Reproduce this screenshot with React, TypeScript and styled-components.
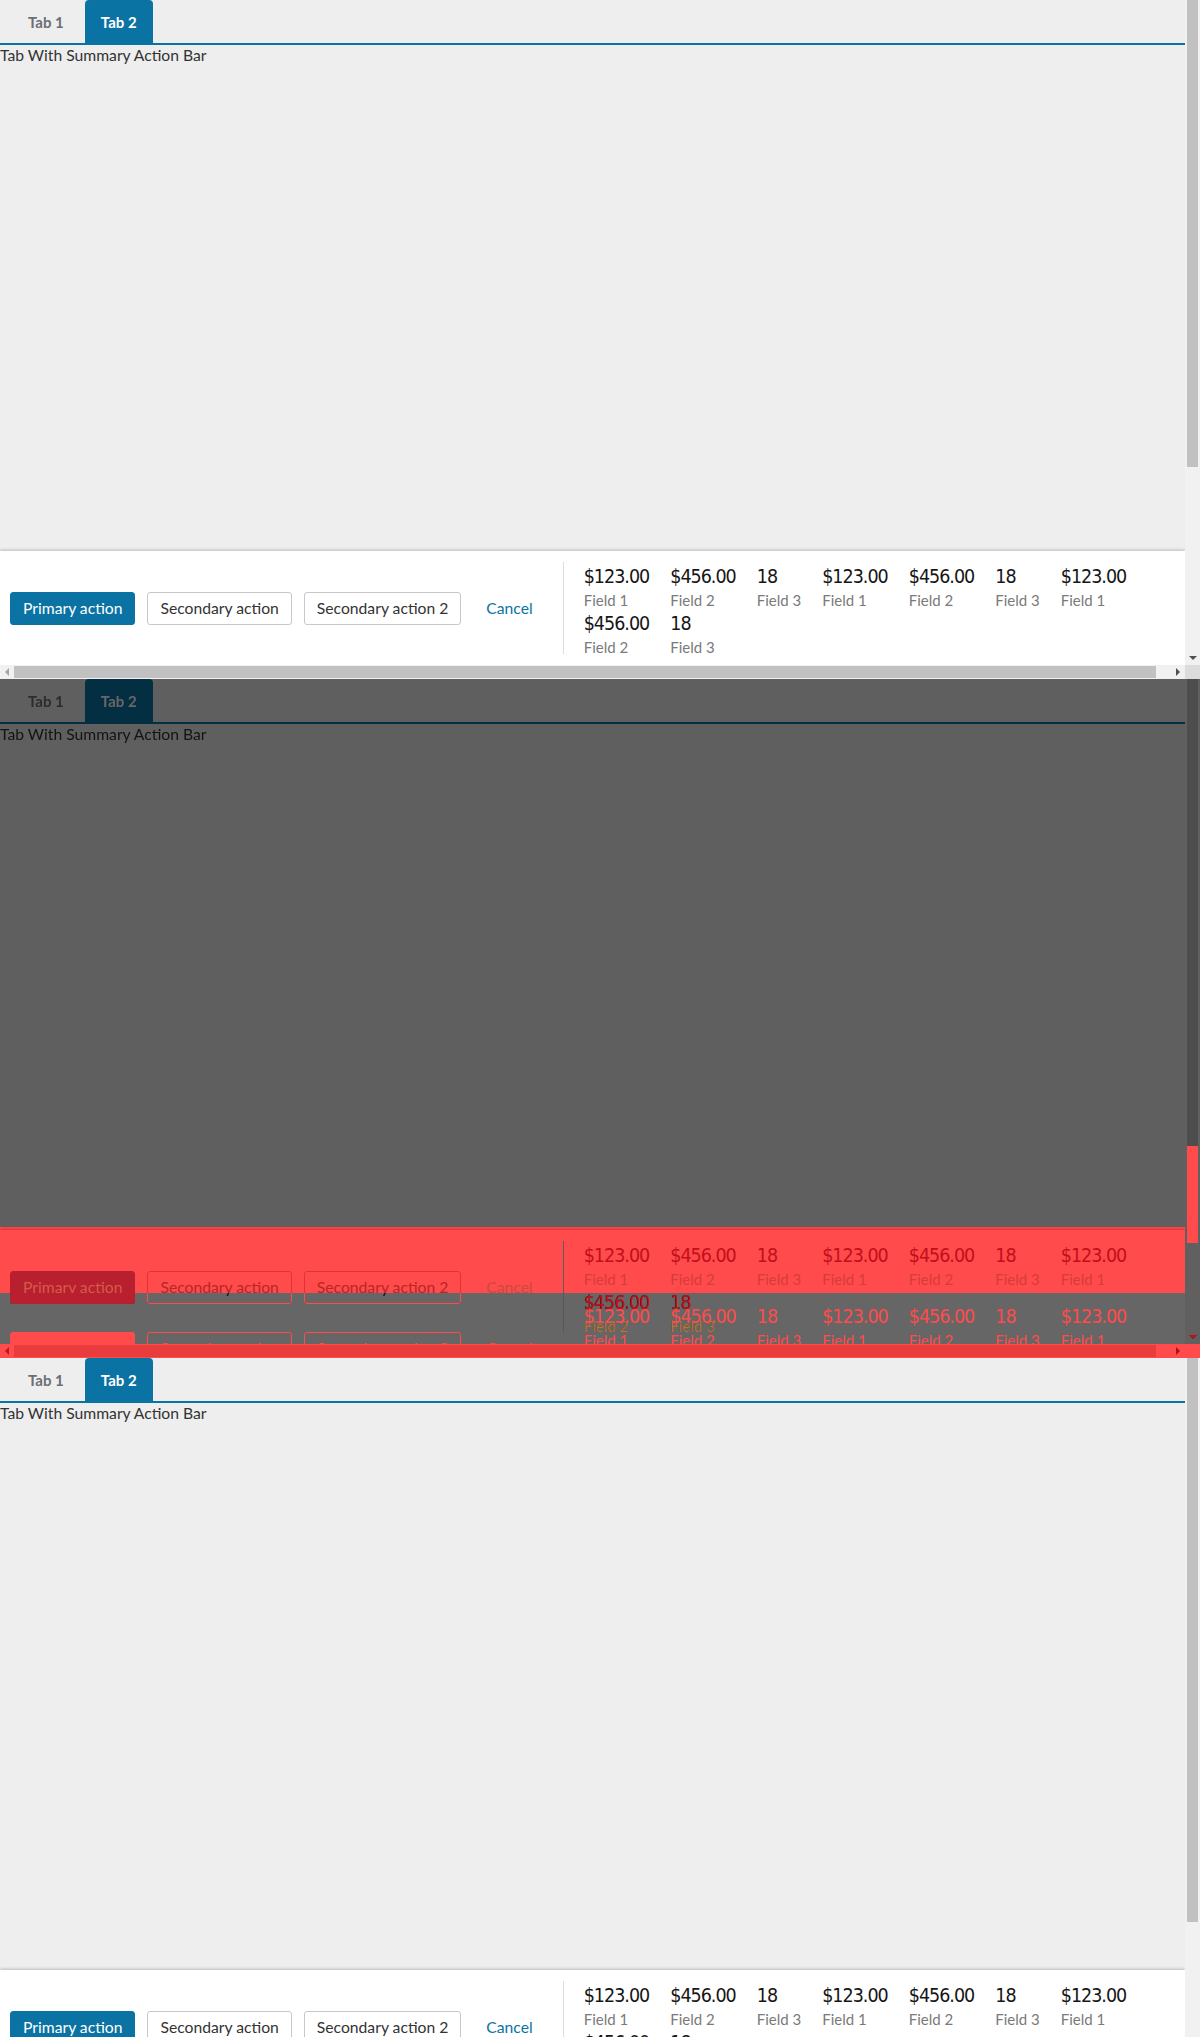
import React from 'react'
import styled, { createGlobalStyle, ThemeProvider } from 'styled-components'

type Palette = {
  pageBg: string
  text: string
  tabText: string
  tabActiveBg: string
  tabActiveText: string
  line: string
  barBg: string
  barShadow: string
  primaryBg: string
  primaryText: string
  secBg: string
  secBorder: string
  secText: string
  cancel: string
  divider: string
  value: string
  label: string
  track: string
  thumb: string
  arrow: string
  arrowOff: string
  corner: string
}

const T = 'transparent'
const RED = '#ff4b4b'

const normal: Palette = {
  pageBg: '#eeeeee',
  text: '#333333',
  tabText: '#6c6f72',
  tabActiveBg: '#0b73a3',
  tabActiveText: '#ffffff',
  line: '#0b73a3',
  barBg: '#ffffff',
  barShadow: '0 -1px 3px rgba(0, 0, 0, 0.22)',
  primaryBg: '#0b73a3',
  primaryText: '#ffffff',
  secBg: '#ffffff',
  secBorder: '#c8c8c8',
  secText: '#333333',
  cancel: '#0b73a3',
  divider: '#dddddd',
  value: '#161616',
  label: '#7a7a7a',
  track: '#f1f1f1',
  thumb: '#c1c1c1',
  arrow: '#505050',
  arrowOff: '#a3a3a3',
  corner: '#dcdcdc',
}

const hidden: Palette = {
  pageBg: T, text: T, tabText: T, tabActiveBg: T, tabActiveText: T, line: T,
  barBg: T, barShadow: 'none', primaryBg: T, primaryText: T, secBg: T, secBorder: T,
  secText: T, cancel: T, divider: T, value: T, label: T, track: T, thumb: T,
  arrow: T, arrowOff: T, corner: T,
}

// diff band: changed pixels, the old page showing darker through the red
const band: Palette = {
  ...hidden,
  pageBg: RED,
  barBg: RED,
  barShadow: '0 -1px 3px rgba(140, 0, 0, 0.35)',
  primaryBg: '#b8202f',
  primaryText: '#d65a48',
  secBorder: '#dd3535',
  secText: '#b82626',
  cancel: '#c94a40',
  divider: '#5c5c5c',
  value: '#c20f1b',
  label: '#d63c3c',
  track: RED,
  thumb: '#e93c3c',
  arrow: '#a81414',
  arrowOff: '#b81a1a',
  corner: RED,
}

const ghostOld: Palette = {
  ...hidden,
  primaryBg: '#b8202f',
  secBorder: RED,
  value: '#c20f1b',
  label: '#b8763a',
  arrow: '#c20f1b',
}

const ghostNew: Palette = {
  ...hidden,
  primaryBg: RED,
  secBorder: RED,
  secText: RED,
  cancel: RED,
  value: RED,
  label: RED,
  thumb: RED,
}

const c = (k: keyof Palette) => ({ theme }: { theme: any }) => theme[k]

const GlobalStyle = createGlobalStyle`
  html, body {
    margin: 0;
    padding: 0;
    background: #eeeeee;
  }
  body {
    width: 1200px;
    font-family: Lato, "Open Sans", sans-serif;
  }
`

const Frame = styled.section`
  position: relative;
  width: 1200px;
  height: 679px;
  overflow: hidden;
`

const Dimmed = styled.div`
  filter: brightness(0.4);
`

const Layer = styled.div<{ $clip: string }>`
  position: absolute;
  inset: 0;
  clip-path: inset(${({ $clip }) => $clip});
`

const PageGrid = styled.div`
  display: grid;
  grid-template-columns: 1fr 15px;
  grid-template-rows: auto 14px;
  width: 1200px;
  background: ${c('pageBg')};
  font-family: Lato, "Open Sans", sans-serif;
`

const Main = styled.div`
  display: flex;
  flex-direction: column;
  min-width: 0;
`

const TabList = styled.div`
  display: flex;
  gap: 5px;
  height: 43px;
  padding-left: 12px;
  border-bottom: 2px solid ${c('line')};
`

const Tab = styled.div<{ $active?: boolean }>`
  display: flex;
  align-items: center;
  padding: 0 16px;
  border-radius: 4px 4px 0 0;
  font-size: 15px;
  font-weight: 700;
  background: ${({ $active, theme }) => ($active ? (theme as Palette).tabActiveBg : 'transparent')};
  color: ${({ $active, theme }) => ($active ? (theme as Palette).tabActiveText : (theme as Palette).tabText)};
`

const Title = styled.div`
  font-size: 15.7px;
  line-height: 20px;
  color: ${c('text')};
`

const Body = styled.div<{ $h: number }>`
  height: ${({ $h }) => $h}px;
`

const Bar = styled.div`
  display: flex;
  align-items: center;
  height: 114px;
  padding-left: 10px;
  background: ${c('barBg')};
  box-shadow: ${c('barShadow')};
`

const Actions = styled.div`
  display: flex;
  align-items: center;
  gap: 12px;
`

const Button = styled.div<{ $kind: 'primary' | 'secondary' | 'link' }>`
  display: inline-flex;
  align-items: center;
  box-sizing: border-box;
  height: 33px;
  padding: 0 12px;
  border-radius: 3px;
  font-size: 15.7px;
  white-space: nowrap;
  border: 1px solid
    ${({ $kind, theme }) =>
      $kind === 'primary' ? (theme as Palette).primaryBg : $kind === 'secondary' ? (theme as Palette).secBorder : 'transparent'};
  background: ${({ $kind, theme }) =>
    $kind === 'primary' ? (theme as Palette).primaryBg : $kind === 'secondary' ? (theme as Palette).secBg : 'transparent'};
  color: ${({ $kind, theme }) =>
    $kind === 'primary' ? (theme as Palette).primaryText : $kind === 'secondary' ? (theme as Palette).secText : (theme as Palette).cancel};
`

const Summary = styled.div`
  flex: 1;
  min-width: 0;
  display: flex;
  flex-wrap: wrap;
  align-content: flex-start;
  box-sizing: border-box;
  height: 92px;
  margin-left: 17px;
  padding: 2px 20px 0 20px;
  border-left: 1px solid ${c('divider')};
`

const Item = styled.div`
  display: flex;
  flex-direction: column;
  margin-right: 21px;
`

const Value = styled.span`
  font-family: "DejaVu Sans Condensed", "DejaVu Sans", sans-serif;
  font-size: 19.5px;
  letter-spacing: -1px;
  line-height: 26px;
  color: ${c('value')};
  white-space: nowrap;
`

const Label = styled.span`
  font-size: 15px;
  line-height: 21px;
  color: ${c('label')};
  white-space: nowrap;
`

const VScroll = styled.div`
  display: flex;
  flex-direction: column;
  justify-content: space-between;
  align-items: center;
  background: ${c('track')};
`

const VThumb = styled.div<{ $h: number }>`
  align-self: stretch;
  height: ${({ $h }) => $h}px;
  margin: 0 2px;
  background: ${c('thumb')};
`

const HScroll = styled.div`
  display: flex;
  align-items: center;
  background: ${c('track')};
`

const ArrowBox = styled.div`
  display: flex;
  align-items: center;
  justify-content: center;
  width: 14px;
  height: 14px;
  flex: none;
`

const HThumb = styled.div`
  width: 1142px;
  height: 12px;
  background: ${c('thumb')};
`

const Spacer = styled.div`
  flex: 1;
`

const Corner = styled.div`
  background: ${c('corner')};
`

const Arrow = styled.span<{ $dir: 'left' | 'right' | 'down'; $off?: boolean }>`
  width: 0;
  height: 0;
  ${({ $dir, $off, theme }) => {
    const col = $off ? (theme as Palette).arrowOff : (theme as Palette).arrow
    if ($dir === 'down') return `border-left: 4px solid transparent; border-right: 4px solid transparent; border-top: 4px solid ${col}; margin-bottom: 5px;`
    if ($dir === 'left') return `border-top: 4px solid transparent; border-bottom: 4px solid transparent; border-right: 4px solid ${col};`
    return `border-top: 4px solid transparent; border-bottom: 4px solid transparent; border-left: 4px solid ${col};`
  }}
`

const fields = [
  { value: '$123.00', label: 'Field 1' },
  { value: '$456.00', label: 'Field 2' },
  { value: '18', label: 'Field 3' },
]
const items = [...fields, ...fields, ...fields]

const SummaryBar = () => (
  <Bar>
    <Actions>
      <Button $kind="primary">Primary action</Button>
      <Button $kind="secondary">Secondary action</Button>
      <Button $kind="secondary">Secondary action 2</Button>
      <Button $kind="link">Cancel</Button>
    </Actions>
    <Summary>
      {items.map((it, i) => (
        <Item key={i}>
          <Value>{it.value}</Value>
          <Label>{it.label}</Label>
        </Item>
      ))}
    </Summary>
  </Bar>
)

type PageProps = { palette: Palette; bodyHeight: number; thumb: number }

const Page = ({ palette, bodyHeight, thumb }: PageProps) => (
  <ThemeProvider theme={palette}>
    <PageGrid>
      <Main>
        <TabList>
          <Tab>Tab 1</Tab>
          <Tab $active>Tab 2</Tab>
        </TabList>
        <Title>Tab With Summary Action Bar</Title>
        <Body $h={bodyHeight} />
        <SummaryBar />
      </Main>
      <VScroll>
        <VThumb $h={thumb} />
        <Arrow $dir="down" />
      </VScroll>
      <HScroll>
        <ArrowBox>
          <Arrow $dir="left" $off />
        </ArrowBox>
        <HThumb />
        <Spacer />
        <ArrowBox>
          <Arrow $dir="right" />
        </ArrowBox>
      </HScroll>
      <Corner />
    </PageGrid>
  </ThemeProvider>
)

const before = { bodyHeight: 486, thumb: 467 }
const after = { bodyHeight: 547, thumb: 564 }

const App = () => (
  <>
    <GlobalStyle />
    <Frame>
      <Page palette={normal} {...before} />
    </Frame>
    <Frame>
      <Dimmed>
        <Page palette={normal} {...before} />
      </Dimmed>
      <Layer $clip="548px 15px 65px 0">
        <Page palette={band} {...before} />
      </Layer>
      <Layer $clip="614px 15px 14px 0">
        <Page palette={ghostOld} {...before} />
      </Layer>
      <Layer $clip="614px 15px 14px 0">
        <Page palette={ghostNew} {...after} />
      </Layer>
      <Layer $clip="665px 0 0 0">
        <Page palette={band} {...before} />
      </Layer>
      <Layer $clip="467px 0 113px 1185px">
        <Page palette={ghostNew} {...after} />
      </Layer>
      <Layer $clip="640px 0 14px 1185px">
        <Page palette={ghostOld} {...before} />
      </Layer>
    </Frame>
    <Frame>
      <Page palette={normal} {...after} />
    </Frame>
  </>
)

export default App
